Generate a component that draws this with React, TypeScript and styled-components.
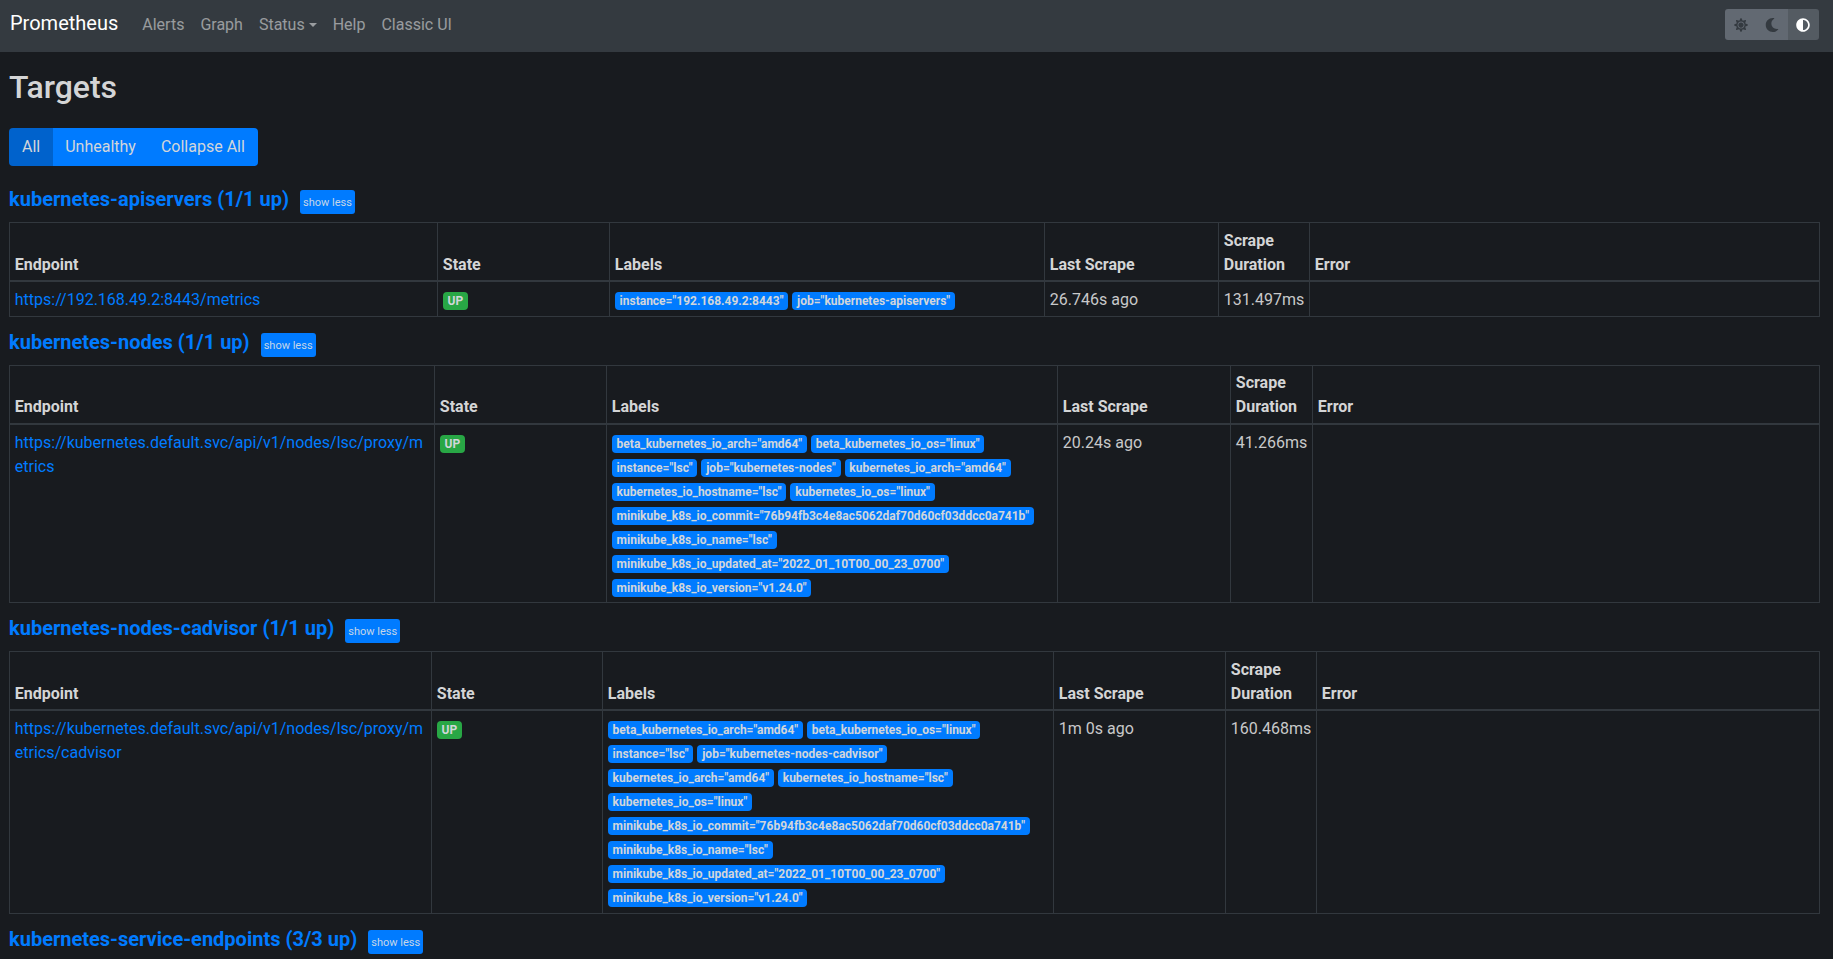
import React from "react";
import styled, { createGlobalStyle } from "styled-components";
import { FaSun, FaMoon, FaAdjust } from "react-icons/fa";

const Global = createGlobalStyle`
  html, body { margin: 0; padding: 0; height: 100%; overflow: hidden; background: #181b1f; }
  body { font-family: Roboto, "Liberation Sans", sans-serif; font-size: 16px; line-height: 1.5; color: #c8c9ca; }
  * { box-sizing: border-box; }
`;

const Page = styled.div`
  height: 959px;
  overflow: hidden;
`;
const Navbar = styled.nav`
  display: flex;
  align-items: center;
  height: 52px;
  padding: 0 14px 0 10px;
  background: #343a40;
`;
const Brand = styled.a`
  font-size: 20px;
  line-height: 30px;
  color: #fff;
  margin-right: 16px;
  position: relative;
  top: -3px;
`;
const NavLink = styled.a`
  color: rgba(255, 255, 255, 0.5);
  padding: 6px 8px 8px;
`;
const Caret = styled.span`
  display: inline-block;
  margin-left: 4px;
  vertical-align: 3px;
  border-top: 4.8px solid currentColor;
  border-left: 4.8px solid transparent;
  border-right: 4.8px solid transparent;
`;
const ThemeGroup = styled.div`
  margin-left: auto;
  margin-bottom: 3px;
  display: flex;
  height: 31px;
  border-radius: 3px;
  overflow: hidden;
`;
const ThemeButton = styled.button<{ $active?: boolean }>`
  width: 31.33px;
  padding: 0;
  border: 0;
  display: flex;
  align-items: center;
  justify-content: center;
  font-size: 14px;
  background: ${(p) => (p.$active ? "#545b62" : "#626972")};
  color: ${(p) => (p.$active ? "#fff" : "#343a40")};
`;
const Main = styled.main`
  padding: 0 13px 0 9px;
`;
const Title = styled.h2`
  margin: 16px 0 22px;
  font-size: 32px;
  font-weight: 500;
  line-height: 38px;
  color: #d4d5d6;
`;
const FilterGroup = styled.div`
  display: inline-flex;
  height: 38px;
  border-radius: 4px;
  overflow: hidden;
  margin-bottom: 24.1px;
  vertical-align: top;
`;
const FilterButton = styled.button<{ $active?: boolean }>`
  font: inherit;
  border: 0;
  padding: 0 13px;
  color: #d2d6da;
  background: ${(p) => (p.$active ? "#0062cc" : "#007bff")};
  position: relative;
  z-index: ${(p) => (p.$active ? 1 : 0)};
  & + & {
    margin-left: -1px;
  }
`;
const PoolHeader = styled.div`
  display: flex;
  align-items: flex-start;
  height: 32.2px;
`;
const PoolTitle = styled.a`
  font-size: 20px;
  font-weight: 700;
  line-height: 19px;
  color: #007bff;
  margin-right: 11px;
`;
const ShowLess = styled.button`
  height: 24px;
  width: 55px;
  padding: 1px 0 0;
  border: 0;
  border-radius: 3px;
  font: inherit;
  font-size: 11px;
  line-height: 23px;
  color: #c5d6e8;
  background: #007bff;
`;
const Table = styled.table`
  width: 100%;
  table-layout: fixed;
  border-collapse: collapse;
  margin-bottom: 16px;
`;
const Column = styled.col<{ $w?: number }>`
  ${(p) => (p.$w ? `width: ${p.$w}px;` : "")}
`;
const Head = styled.th`
  padding: 5.3px 4.8px 3.7px;
  text-align: left;
  vertical-align: bottom;
  font-weight: 700;
  color: #d4d5d6;
  border: 1px solid #32383e;
  border-bottom-width: 2px;
`;
const Cell = styled.td`
  padding: 5.8px 4.8px 3.6px;
  vertical-align: top;
  border: 1px solid #32383e;
`;
const EndpointLink = styled.a`
  color: #007bff;
  word-break: break-all;
`;
const Badge = styled.span<{ $up?: boolean }>`
  display: inline-block;
  padding: 3px 4.8px;
  margin-right: 4px;
  font-size: 12px;
  font-weight: 700;
  line-height: 1;
  border-radius: 4px;
  white-space: nowrap;
  color: #d2d6da;
  background: ${(p) => (p.$up ? "#28a745" : "#007bff")};
`;

type Pool = {
  name: string;
  count: string;
  cols: number[];
  endpoint: string;
  labels: string[];
  last: string;
  duration: string;
};

const commit = 'minikube_k8s_io_commit="76b94fb3c4e8ac5062daf70d60cf03ddcc0a741b"';
const updated = 'minikube_k8s_io_updated_at="2022_01_10T00_00_23_0700"';

const pools: Pool[] = [
  {
    name: "kubernetes-apiservers",
    count: "1/1 up",
    cols: [428, 172, 435, 174, 91],
    endpoint: "https://192.168.49.2:8443/metrics",
    labels: ['instance="192.168.49.2:8443"', 'job="kubernetes-apiservers"'],
    last: "26.746s ago",
    duration: "131.497ms",
  },
  {
    name: "kubernetes-nodes",
    count: "1/1 up",
    cols: [425, 172, 451, 173, 82],
    endpoint: "https://kubernetes.default.svc/api/v1/nodes/lsc/proxy/metrics",
    labels: [
      'beta_kubernetes_io_arch="amd64"',
      'beta_kubernetes_io_os="linux"',
      'instance="lsc"',
      'job="kubernetes-nodes"',
      'kubernetes_io_arch="amd64"',
      'kubernetes_io_hostname="lsc"',
      'kubernetes_io_os="linux"',
      commit,
      'minikube_k8s_io_name="lsc"',
      updated,
      'minikube_k8s_io_version="v1.24.0"',
    ],
    last: "20.24s ago",
    duration: "41.266ms",
  },
  {
    name: "kubernetes-nodes-cadvisor",
    count: "1/1 up",
    cols: [422, 171, 451, 172, 91],
    endpoint: "https://kubernetes.default.svc/api/v1/nodes/lsc/proxy/metrics/cadvisor",
    labels: [
      'beta_kubernetes_io_arch="amd64"',
      'beta_kubernetes_io_os="linux"',
      'instance="lsc"',
      'job="kubernetes-nodes-cadvisor"',
      'kubernetes_io_arch="amd64"',
      'kubernetes_io_hostname="lsc"',
      'kubernetes_io_os="linux"',
      commit,
      'minikube_k8s_io_name="lsc"',
      updated,
      'minikube_k8s_io_version="v1.24.0"',
    ],
    last: "1m 0s ago",
    duration: "160.468ms",
  },
];

const headers = ["Endpoint", "State", "Labels", "Last Scrape", "Scrape Duration", "Error"];

export default function App() {
  return (
    <Page>
      <Global />
      <Navbar>
        <Brand>Prometheus</Brand>
        <NavLink>Alerts</NavLink>
        <NavLink>Graph</NavLink>
        <NavLink>
          Status
          <Caret />
        </NavLink>
        <NavLink>Help</NavLink>
        <NavLink>Classic UI</NavLink>
        <ThemeGroup>
          <ThemeButton>
            <FaSun />
          </ThemeButton>
          <ThemeButton>
            <FaMoon />
          </ThemeButton>
          <ThemeButton $active>
            <FaAdjust />
          </ThemeButton>
        </ThemeGroup>
      </Navbar>
      <Main>
        <Title>Targets</Title>
        <FilterGroup>
          <FilterButton $active>All</FilterButton>
          <FilterButton>Unhealthy</FilterButton>
          <FilterButton>Collapse All</FilterButton>
        </FilterGroup>
        {pools.map((pool) => (
          <section key={pool.name}>
            <PoolHeader>
              <PoolTitle>
                {pool.name} ({pool.count})
              </PoolTitle>
              <ShowLess>show less</ShowLess>
            </PoolHeader>
            <Table>
              <colgroup>
                {pool.cols.map((w, i) => (
                  <Column key={i} $w={w} />
                ))}
                <Column />
              </colgroup>
              <thead>
                <tr>
                  {headers.map((h) => (
                    <Head key={h}>{h}</Head>
                  ))}
                </tr>
              </thead>
              <tbody>
                <tr>
                  <Cell>
                    <EndpointLink>{pool.endpoint}</EndpointLink>
                  </Cell>
                  <Cell>
                    <Badge $up>UP</Badge>
                  </Cell>
                  <Cell>
                    {pool.labels.map((l) => (
                      <Badge key={l}>{l}</Badge>
                    ))}
                  </Cell>
                  <Cell>{pool.last}</Cell>
                  <Cell>{pool.duration}</Cell>
                  <Cell />
                </tr>
              </tbody>
            </Table>
          </section>
        ))}
        <PoolHeader>
          <PoolTitle>kubernetes-service-endpoints (3/3 up)</PoolTitle>
          <ShowLess>show less</ShowLess>
        </PoolHeader>
      </Main>
    </Page>
  );
}
